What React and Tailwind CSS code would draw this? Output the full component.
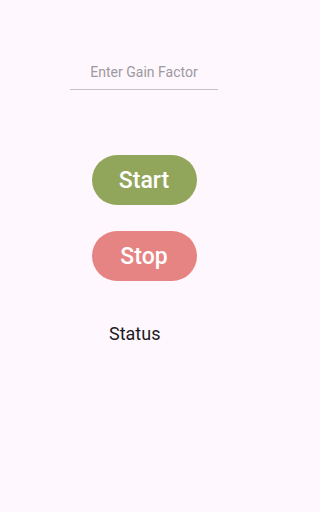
export default function App() {
  return (
    <div className="min-h-[512px] w-full bg-[#fef7fd] font-['Roboto',sans-serif]">
      <div className="w-[288px] flex flex-col items-center">
        <input
          type="text"
          placeholder="Enter Gain Factor"
          className="mt-[50px] w-[148px] h-[40px] pt-[4px] bg-transparent border-b border-[#c4c4c4] text-center text-[14px] text-[#333] placeholder:text-[#9d999d] outline-none"
        />

        <button className="mt-[65px] w-[105px] h-[50px] pt-[2px] rounded-full bg-[#91a65b] text-white text-[23px] font-medium">
          Start
        </button>

        <button className="mt-[26px] w-[105px] h-[50px] pt-[2px] rounded-full bg-[#e68383] text-white text-[23px] font-medium">
          Stop
        </button>

        <div className="mt-[41px] self-stretch pl-[109px] text-[18px] leading-[24px] text-[#1c1b1f]">
          Status
        </div>
      </div>
    </div>
  );
}
